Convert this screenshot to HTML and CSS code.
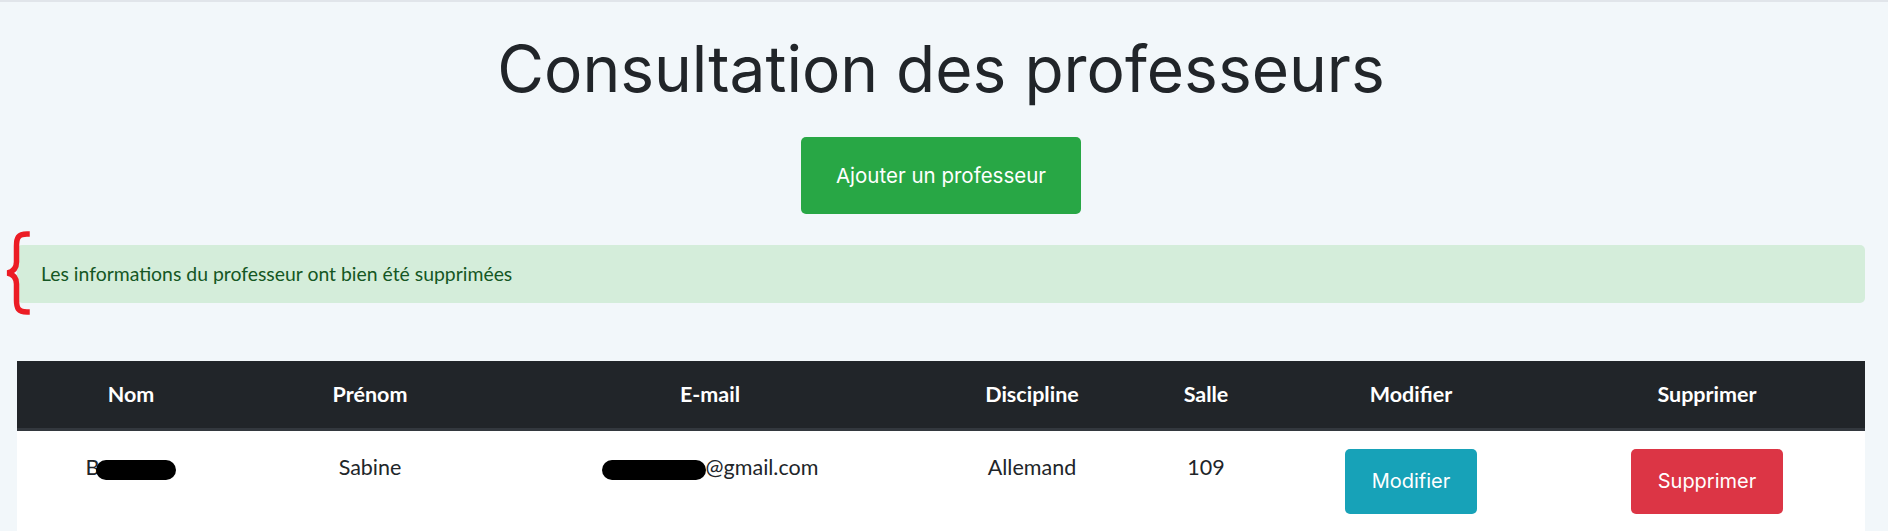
FILE: index.html
```html
<!DOCTYPE html>
<html lang="fr">
<head>
<meta charset="utf-8">
<title>Consultation des professeurs</title>
<link rel="stylesheet" href="styles.css">
</head>
<body>
<main class="page">
  <h1 class="title">Consultation des professeurs</h1>
  <div class="actions">
    <a class="btn btn-success btn-add" href="#">Ajouter un professeur</a>
  </div>
  <div class="alert-wrap">
    <svg class="brace" width="28" height="86" viewBox="0 0 28 86" aria-hidden="true">
      <path d="M24 4 C15 4 13.5 8 13.5 16 L13.5 32 C13.5 38 11 41.5 4.5 43 C11 44.5 13.5 48 13.5 54 L13.5 70 C13.5 78 15 82 24 82" fill="none" stroke="#ec1c24" stroke-width="5.5" stroke-linecap="square"/>
    </svg>
    <div class="alert alert-success">Les informations du professeur ont bien été supprimées</div>
  </div>
  <table class="profs">
    <colgroup>
      <col class="c-nom"><col class="c-prenom"><col class="c-mail"><col class="c-disc"><col class="c-salle"><col class="c-mod"><col class="c-sup">
    </colgroup>
    <thead>
      <tr>
        <th>Nom</th>
        <th>Prénom</th>
        <th>E-mail</th>
        <th>Discipline</th>
        <th>Salle</th>
        <th>Modifier</th>
        <th>Supprimer</th>
      </tr>
    </thead>
    <tbody>
      <tr>
        <td class="txt">B<span class="redact redact-name"></span></td>
        <td class="txt">Sabine</td>
        <td class="txt"><span class="redact redact-mail"></span>@gmail.com</td>
        <td class="txt">Allemand</td>
        <td class="txt">109</td>
        <td><a class="btn btn-info btn-row" href="#">Modifier</a></td>
        <td><a class="btn btn-danger btn-row" href="#">Supprimer</a></td>
      </tr>
    </tbody>
  </table>
</main>
</body>
</html>
```

FILE: styles.css
```css
html, body {
  margin: 0;
  padding: 0;
}

body {
  background: #f2f7fa;
  border-top: 2px solid #e1e5ea;
  font-family: "Lato", "Liberation Sans", sans-serif;
  font-size: 18px;
  line-height: 1.5;
  color: #212529;
  overflow: hidden;
}

.page {
  padding: 0 23px 0 17px;
}

.title {
  margin: 28px 0 0;
  font-family: "Inter", "Open Sans", sans-serif;
  font-weight: 400;
  font-size: 64px;
  line-height: 77px;
  text-align: center;
  color: #212529;
}

.actions {
  display: flex;
  justify-content: center;
  margin-top: 30px;
}

.btn {
  display: inline-block;
  font-family: "Inter", "Open Sans", sans-serif;
  font-weight: 400;
  color: #fff;
  text-decoration: none;
  border-radius: 5px;
  text-align: center;
  white-space: nowrap;
}

.btn-add {
  font-size: 20.5px;
  line-height: 31px;
  padding: 23px 35px;
}

.btn-success { background: #28a745; }
.btn-info { background: #17a2b8; }
.btn-danger { background: #dc3545; }

.alert-wrap {
  position: relative;
  margin-top: 31px;
}

.brace {
  position: absolute;
  left: -14px;
  top: -15px;
}

.alert {
  height: 58px;
  box-sizing: border-box;
  display: flex;
  align-items: center;
  padding: 0 24px;
  border-radius: 5px;
  font-size: 19.4px;
}

.alert-success {
  background: #d4edda;
  color: #155724;
}

.profs {
  width: 100%;
  margin-top: 58px;
  border-collapse: collapse;
  table-layout: fixed;
  background: #fff;
}

.c-nom { width: 228px; }
.c-prenom { width: 250px; }
.c-mail { width: 430px; }
.c-disc { width: 214px; }
.c-salle { width: 134px; }
.c-mod { width: 276px; }
.c-sup { width: 316px; }

.profs th {
  background: #212529;
  color: #fff;
  font-weight: 700;
  font-size: 21.5px;
  line-height: 32px;
  padding: 17px 8px 18px;
  border-bottom: 3px solid #33383e;
  text-align: center;
}

.profs td {
  padding: 18px 8px 40px;
  text-align: center;
  vertical-align: top;
  font-size: 21.5px;
  line-height: 32px;
}

.profs td.txt {
  padding-top: 20px;
}

.redact {
  display: inline-block;
  background: #000;
  border-radius: 10px;
  vertical-align: -5px;
  height: 20px;
}

.redact-name {
  width: 80px;
  margin-left: -3px;
}

.redact-mail {
  width: 104px;
}

.btn-row {
  font-size: 20px;
  line-height: 31px;
  padding: 17px 27px;
}
```
